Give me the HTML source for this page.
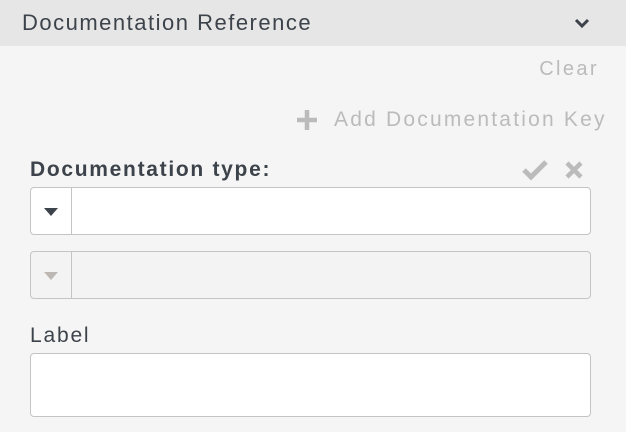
<!DOCTYPE html>
<html><head><style>
body{margin:0;width:626px;height:432px;background:#f5f5f5;font-family:"Liberation Sans",sans-serif;position:relative;overflow:hidden}
.a{position:absolute;white-space:nowrap}
.hdr{position:absolute;left:0;top:0;width:626px;height:46px;background:#e6e6e6}
.inp{position:absolute;left:30px;width:559px;border:1px solid #c4c4c4;border-radius:4px;background:#fff}
.div{position:absolute;left:40px;top:0;bottom:0;width:1px;background:#c4c4c4}
</style></head><body>
<div class="hdr"></div>
<div class="a" style="left:22px;top:10px;font-size:22px;letter-spacing:1.5px;color:#3d434a">Documentation Reference</div>
<svg class="a" style="left:574px;top:17px" width="16" height="12" viewBox="0 0 16 12"><path d="M2 3l6 6 6-6" stroke="#3d434a" stroke-width="3" fill="none"/></svg>
<div class="a" style="right:27px;top:58px;font-size:20px;letter-spacing:2.4px;color:#bbb">Clear</div>
<svg class="a" style="left:295px;top:108px" width="24" height="24" viewBox="0 0 24 24"><path d="M12 2v20M2 12h20" stroke="#bbb" stroke-width="4.5"/></svg>
<div class="a" style="left:334px;top:108px;font-size:21px;color:#bbb;letter-spacing:2.2px">Add Documentation Key</div>
<div class="a" style="left:30px;top:158px;font-size:21px;font-weight:bold;letter-spacing:1.7px;color:#3d434a">Documentation type:</div>
<svg class="a" style="left:522px;top:159px" width="26" height="22" viewBox="0 0 26 22"><path d="M2 11l7 7L24 3" stroke="#bbb" stroke-width="5" fill="none"/></svg>
<svg class="a" style="left:564px;top:160px" width="20" height="20" viewBox="0 0 20 20"><path d="M3 3l14 14M17 3L3 17" stroke="#bbb" stroke-width="4.5"/></svg>
<div class="inp" style="top:187px;height:46px"><div class="div"></div>
<svg class="a" style="left:13px;top:20px" width="14" height="8"><path d="M0 0h14L7 8z" fill="#3d434a"/></svg></div>
<div class="inp" style="top:251px;height:46px;background:#f3f3f3"><div class="div"></div>
<svg class="a" style="left:13px;top:20px" width="14" height="8"><path d="M0 0h14L7 8z" fill="#bdb8b4"/></svg></div>
<div class="a" style="left:30px;top:324px;font-size:21px;letter-spacing:1.8px;color:#3d434a">Label</div>
<div class="inp" style="top:353px;height:62px"></div>
</body></html>
